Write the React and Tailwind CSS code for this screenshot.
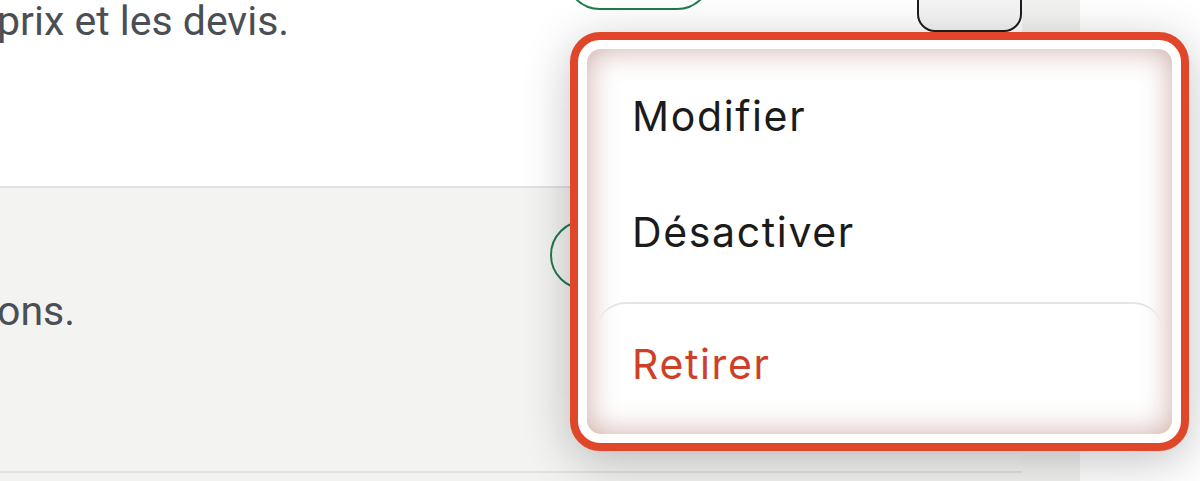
const rows = [
  { text: "prix et les devis.", bg: "bg-white", h: "h-[290px]", pill: "mt-[42px] w-[147px]", btn: "mt-[64px]" },
  { text: "ons.", bg: "bg-[#f3f3f1]", h: "h-[285px]", pill: "mt-[32px] w-[162px]", btn: "mt-[32px]" },
];

const menuItems = [
  { label: "Modifier" },
  { label: "Désactiver" },
];

const App = () => {
  return (
    <div className="relative flex h-[481px] w-[1200px] overflow-hidden bg-white font-['Roboto',sans-serif]">
      <div className="w-[1080px] bg-[#f2f2f0]">
        <div className="-mt-[102px] w-[1022px]">
          {rows.map((row, i) => (
            <div
              key={i}
              className={`flex items-start border-b-2 border-[#e2e2e0] ${row.bg} ${row.h}`}
            >
              <p className="-ml-[3px] flex-1 pt-[99px] text-[41px] leading-[48px] text-[#4a4e55]">
                {row.text}
              </p>
              <div className="flex items-start gap-[205px]">
                {/* status pill, its label sits under the menu */}
                <button
                  className={`${row.pill} h-[70px] rounded-full border-2 border-[#1f7a4f]`}
                ></button>
                <button
                  className={`${row.btn} h-[70px] w-[105px] rounded-[18px] border-2 border-[#1d1d1d] bg-[#f4f4f4]`}
                ></button>
              </div>
            </div>
          ))}
        </div>
      </div>
      <div className="flex-1 bg-white"></div>

      {/* dropdown menu, highlighted */}
      <div className="absolute left-[570px] top-[32px] h-[419px] w-[619px] rounded-[30px] border-[8px] border-[#e0472a] bg-white p-[9px] shadow-[0_10px_48px_rgba(0,0,0,0.24)]">
        <div className="h-full rounded-[14px] bg-white p-[9px] font-['Inter',sans-serif] shadow-[inset_0_0_30px_rgba(150,80,70,0.48)]">
          {menuItems.map((item) => (
            <div
              key={item.label}
              className="px-[36px] py-[38px] text-[41px] leading-[40px] tracking-[0.04em] text-[#1b1b1b]"
            >
              {item.label}
            </div>
          ))}
          <div className="mt-[12px] rounded-[30px] border-t-2 border-[#e4e4e4] px-[36px] pt-[40px] pb-[30px] text-[41px] leading-[40px] tracking-[0.04em] text-[#cf3f27]">
            Retirer
          </div>
        </div>
      </div>
    </div>
  );
};

export default App;
